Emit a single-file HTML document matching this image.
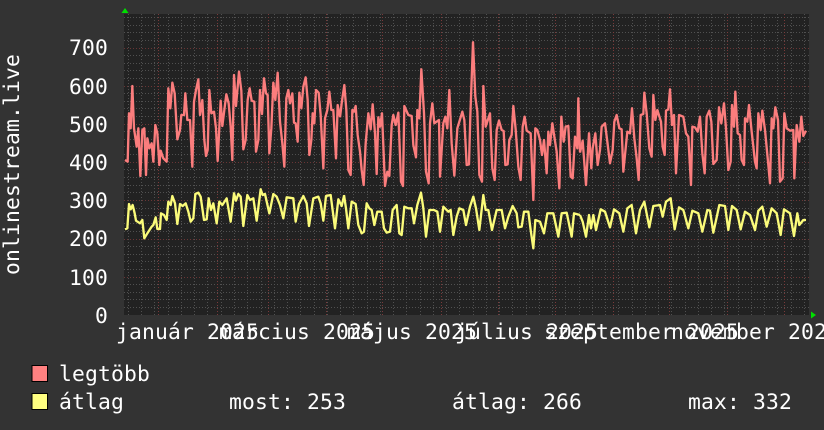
<!DOCTYPE html>
<html><head><meta charset="utf-8"><style>
html,body{margin:0;padding:0;background:#333;width:824px;height:430px;overflow:hidden}
svg{display:block}
text{font-family:"DejaVu Sans Mono","Liberation Mono",monospace;font-size:21.33px;fill:#fff;letter-spacing:.16px}
</style></head><body>
<svg width="824" height="430" viewBox="0 0 824 430" xmlns="http://www.w3.org/2000/svg">
<rect width="824" height="430" fill="#333"/>
<rect x="124" y="14" width="685" height="301" fill="#222"/>
<g shape-rendering="crispEdges" fill="none" stroke-width="1">
<path stroke="#505050" stroke-dasharray="1 2" d="M124 307.5h685M124 299.5h685M124 292.5h685M124 284.5h685M124 269.5h685M124 261.5h685M124 254.5h685M124 246.5h685M124 231.5h685M124 223.5h685M124 215.5h685M124 208.5h685M124 192.5h685M124 185.5h685M124 177.5h685M124 169.5h685M124 154.5h685M124 146.5h685M124 139.5h685M124 131.5h685M124 116.5h685M124 108.5h685M124 101.5h685M124 93.5h685M124 78.5h685M124 70.5h685M124 63.5h685M124 55.5h685M124 40.5h685M124 32.5h685M124 25.5h685M124 17.5h685"/>
<path stroke="#505050" stroke-dasharray="1 2" d="M128.5 14v301M141.5 14v301M154.5 14v301M168.5 14v301M181.5 14v301M194.5 14v301M207.5 14v301M221.5 14v301M234.5 14v301M247.5 14v301M261.5 14v301M274.5 14v301M287.5 14v301M300.5 14v301M314.5 14v301M327.5 14v301M340.5 14v301M353.5 14v301M367.5 14v301M380.5 14v301M393.5 14v301M406.5 14v301M420.5 14v301M433.5 14v301M446.5 14v301M459.5 14v301M473.5 14v301M486.5 14v301M499.5 14v301M512.5 14v301M526.5 14v301M539.5 14v301M552.5 14v301M565.5 14v301M579.5 14v301M592.5 14v301M605.5 14v301M618.5 14v301M632.5 14v301M645.5 14v301M658.5 14v301M671.5 14v301M685.5 14v301M698.5 14v301M711.5 14v301M724.5 14v301M738.5 14v301M751.5 14v301M764.5 14v301M777.5 14v301M791.5 14v301M804.5 14v301"/>
<path stroke="#6a3636" stroke-dasharray="1 2" d="M124 48.5h685M124 86.5h685M124 124.5h685M124 162.5h685M124 200.5h685M124 239.5h685M124 277.5h685"/>
<path stroke="#7a3a3a" stroke-dasharray="1 2" d="M158.5 14v301M217.5 14v301M268.5 14v301M326.5 14v301M382.5 14v301M441.5 14v301M498.5 14v301M555.5 14v301M613.5 14v301M669.5 14v301M727.5 14v301M784.5 14v301"/>
</g>
<g fill="none" stroke="#fb7d7d" stroke-width="7" stroke-linejoin="round">
<polyline transform="translate(110 60) scale(.33333)" points="45,300 53,305 57,160 62,205 67,78 72,205 80,260 85,205 91,348 97,210 103,205 108,345 112,235 118,265 125,250 130,305 136,195 142,220 148,315 152,272 160,295 170,305 175,85 181,145 187,68 194,100 202,238 210,210 214,165 222,165 226,100 232,180 240,180 247,320 252,125 258,90 265,58 270,165 277,120 283,240 288,288 293,270 298,90 304,160 312,155 318,205 323,303 332,122 337,198 343,150 349,103 356,130 362,200 367,300 372,45 378,138 387,35 394,92 400,268 407,240 413,120 419,85 425,122 433,125 438,275 445,240 450,90 456,162 462,55 468,100 473,105 478,280 484,205 490,68 496,120 503,38 510,185 517,250 523,320 529,115 535,90 540,130 547,100 552,188 557,190 563,245 568,98 574,145 580,80 587,52 593,120 598,285 604,240 608,160 613,190 618,90 626,98 632,165 640,325 645,175 652,150 658,95 664,150 670,150 678,295 683,135 690,170"/>
<polyline transform="translate(340 30) scale(.33333)" points="0,262 5,220 13,165 19,240 25,420 32,435 37,240 42,245 47,228 53,315 60,365 65,420 71,465 77,340 85,250 92,298 98,223 105,310 110,432 115,262 120,290 126,250 135,468 142,425 148,438 155,285 160,255 167,285 175,248 183,455 189,468 193,228 205,255 215,258 220,345 228,382 232,240 238,265 244,118 252,250 258,425 266,460 270,280 277,220 283,280 297,270 300,440 310,280 316,260 322,295 328,180 335,340 343,437 352,295 367,245 373,270 380,405 387,403 391,258 399,37 406,200 412,245 418,435 426,455 430,168 437,290 450,250 457,415 464,450 470,300 477,272 485,300 491,303 496,405 503,403 508,330 515,315 520,228 527,298 535,410 542,450 548,290 554,260 560,302 572,310 580,510 586,295 592,300 600,330 606,375 612,330 620,430 625,305 630,345 637,280 643,320 650,365 658,475 664,260 671,335 677,290 685,288 692,440 698,445 705,320 712,355 715,205 720,366"/>
<polyline transform="translate(580 70) scale(.33333)" points="0,248 8,212 18,345 27,190 34,295 38,235 46,190 53,285 60,240 65,170 75,160 82,215 90,280 98,240 103,155 110,135 118,175 125,178 130,305 135,255 142,185 150,190 156,115 163,205 170,265 176,330 182,135 190,132 193,68 200,130 208,235 215,260 220,75 226,150 232,120 243,155 248,230 254,255 258,122 265,118 270,58 276,165 282,135 288,310 297,135 310,140 318,190 325,200 333,345 337,170 345,172 353,185 360,140 367,250 374,310 380,140 388,122 394,155 400,282 410,270 417,112 424,160 432,100 438,175 445,300 452,275 456,105 462,170 466,65 473,190 480,195 485,270 492,285 495,145 502,155 507,105 515,185 525,275 530,295 535,130 542,180 547,122 555,180 565,285 570,340 575,145 580,175 586,112 594,150 600,335 608,325 613,130 620,175 630,182 640,180 643,325 650,165 658,215 664,140 670,198 678,182"/>
</g>
<g fill="none" stroke="#fbfb7a" stroke-width="7" stroke-linejoin="round">
<polyline transform="translate(110 180) scale(.33333)" points="45,148 52,145 57,72 62,88 68,75 74,100 78,122 90,130 97,120 103,175 112,160 125,140 130,135 137,112 142,147 150,147 153,100 162,105 170,120 175,65 182,75 187,48 195,70 202,132 210,72 218,78 227,70 235,95 242,125 250,115 256,42 265,38 272,50 282,120 290,118 296,55 303,90 310,70 320,130 328,65 337,75 350,55 362,125 372,40 378,62 385,42 392,50 400,138 412,45 420,60 430,55 440,122 452,28 458,45 465,42 478,100 490,42 500,50 510,75 520,115 530,52 550,55 557,125 567,72 580,48 590,70 597,138 610,55 625,50 632,70 640,122 648,48 662,45 675,145 685,58 695,78 702,48"/>
<polyline transform="translate(340 180) scale(.33333)" points="12,45 18,85 25,145 35,65 47,72 55,135 65,160 72,155 80,70 88,85 95,90 103,135 112,95 125,95 132,145 140,158 150,155 158,90 170,75 178,160 185,165 193,80 205,85 215,85 222,130 232,75 243,38 250,85 258,170 268,90 282,90 292,95 300,155 310,80 325,95 332,90 340,165 350,110 358,85 370,90 378,135 390,80 400,50 408,85 418,150 430,45 437,90 445,90 456,150 470,90 485,90 495,145 505,110 518,78 530,100 535,142 545,140 552,95 565,95 572,150 580,205 586,120 600,125 612,160 622,100 640,100 655,170 665,100 680,98 695,170 702,100 720,105"/>
<polyline transform="translate(580 180) scale(.33333)" points="0,105 8,125 18,170 27,105 33,145 40,105 48,150 62,88 75,95 90,142 102,88 118,100 130,155 142,85 155,75 168,160 180,90 193,65 208,142 220,78 240,75 248,110 258,65 272,55 284,148 297,82 310,90 325,145 337,92 355,100 367,155 382,90 390,92 400,158 418,75 435,78 445,150 456,78 470,90 482,148 495,95 510,105 525,150 535,92 547,80 560,140 575,85 590,100 602,165 612,88 630,100 642,168 652,100 658,135 670,120 678,120"/>
</g>
<path fill="#00e000" d="M125 8l3.5 5h-7z"/>
<path fill="#00e000" d="M816 315l-5 -3.5v7z"/>
<g text-anchor="end">
<text x="108" y="55">700</text>
<text x="108" y="94">600</text>
<text x="108" y="132">500</text>
<text x="108" y="170">400</text>
<text x="108" y="208">300</text>
<text x="108" y="246">200</text>
<text x="108" y="285">100</text>
<text x="108" y="323">0</text>
</g>
<text transform="translate(19 275) rotate(-90)">onlinestream.live</text>
<text x="116" y="339">január 2025</text>
<text x="219" y="339">március 2025</text>
<text x="347" y="339">május 2025</text>
<text x="455" y="339">július 2025</text>
<text x="544" y="339">szeptember 2025</text>
<text x="671" y="339">november 2025</text>
<rect x="32" y="365.500" width="15.500" height="16" fill="#ff8080" stroke="#000" stroke-width="1"/>
<rect x="32" y="393.500" width="15.500" height="16" fill="#ffff80" stroke="#000" stroke-width="1"/>
<text x="59" y="381">legtöbb</text>
<text x="59" y="409">átlag</text>
<text x="229" y="409">most: 253</text>
<text x="452" y="409">átlag: 266</text>
<text x="688" y="409">max: 332</text>
</svg>
</body></html>
